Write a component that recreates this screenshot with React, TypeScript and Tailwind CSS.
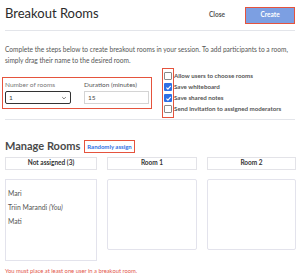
import { useState } from 'react';

// Opciones de la sala de grupos
const options = [
  { id: 'choose', label: 'Allow users to choose rooms', checked: false },
  { id: 'whiteboard', label: 'Save whiteboard', checked: true },
  { id: 'notes', label: 'Save shared notes', checked: true },
  { id: 'invite', label: 'Send invitation to assigned moderators', checked: false },
];

function CheckBox({ checked }: { checked: boolean }) {
  if (checked) {
    return (
      <span className="flex h-[8px] w-[8px] items-center justify-center rounded-[1px] bg-[#2f6fe4]">
        <svg viewBox="0 0 10 10" className="h-[7px] w-[7px]">
          <path d="M2 5.2 L4.2 7.4 L8.2 2.6" fill="none" stroke="white" strokeWidth="1.6" />
        </svg>
      </span>
    );
  }
  return <span className="h-[8px] w-[8px] rounded-[1px] border border-[#8a8a8a] bg-white" />;
}

export default function App() {
  const [rooms] = useState('1');
  const [duration] = useState('15');

  return (
    <div className="h-[279px] w-[300px] overflow-hidden bg-white px-[5px] font-['Lato',sans-serif] text-[#444]">
      {/* Cabecera */}
      <div className="flex h-[31px] items-center border-b border-[#e3e5ea]">
        <h1 className="flex-1 pb-[2px] text-[13px] text-[#2b2b2b]">Breakout Rooms</h1>
        <span className="mr-[20px] text-[6.5px] font-bold text-[#555]">Close</span>
        <button className="h-[17px] w-[50px] border-[1.5px] border-[#e5533d] bg-[#7c9fe2] text-[6.5px] font-bold text-white">
          Create
        </button>
      </div>

      <p className="mt-[13px] whitespace-nowrap text-[6.6px] leading-[11px] text-[#555]">
        Complete the steps below to create breakout rooms in your session. To add participants to a room,
        <br />
        simply drag their name to the desired room.
      </p>

      {/* Configuración */}
      <div className="mt-[2px] flex h-[51px] items-start">
        <div className="ml-[-3px] mt-[9px] flex h-[32px] w-[150px] gap-[13px] border-[1.5px] border-[#e5533d] px-[2px] pt-[1px]">
          <label className="flex w-[66px] flex-col">
            <span className="text-[6.5px] leading-[12px] text-[#777]">Number of rooms</span>
            <div className="flex h-[13px] items-center justify-between rounded-[2px] border border-[#333] px-[3px] text-[6.5px] text-[#444]">
              <span>{rooms}</span>
              <svg viewBox="0 0 10 10" className="h-[6px] w-[6px]">
                <path d="M2 3.5 L5 6.5 L8 3.5" fill="none" stroke="#555" strokeWidth="1.3" />
              </svg>
            </div>
          </label>
          <label className="flex w-[65px] flex-col">
            <span className="text-[6.5px] leading-[12px] text-[#555]">Duration (minutes)</span>
            <div className="flex h-[13px] items-center border border-[#d4d4d4] px-[3px] text-[6.5px] text-[#444]">
              {duration}
            </div>
          </label>
        </div>

        <div className="relative ml-[12px] flex flex-col gap-[3px] pt-[4px]">
          <div className="absolute left-[-2px] top-[0px] h-[50px] w-[12px] border-[1.5px] border-[#e5533d]" />
          {options.map(o => (
            <div key={o.id} className="flex h-[8px] items-center gap-[2px]">
              <CheckBox checked={o.checked} />
              <span className="text-[6.2px] font-bold text-[#555]">{o.label}</span>
            </div>
          ))}
        </div>
      </div>

      <div className="border-b border-[#e3e5ea]" />

      {/* Salas */}
      <div className="mt-[18px] flex items-center">
        <h2 className="text-[11px] font-bold text-[#4a4a4a]">Manage Rooms</h2>
        <span className="ml-[4px] border-[1.5px] border-[#e5533d] px-[2px] py-[1px] text-[6px] font-bold text-[#2f6fe4]">
          Randomly assign
        </span>
      </div>

      <div className="mt-[2px] grid grid-cols-[92px_90px_89px] gap-x-[10px]">
        <div className="flex h-[13px] items-center justify-center border border-[#e3e3e8] text-[6.5px] font-bold text-[#333]">
          Not assigned (3)
        </div>
        <div className="flex h-[13px] items-center justify-center border border-[#e3e3e8] text-[6.5px] font-bold text-[#333]">
          Room 1
        </div>
        <div className="flex h-[13px] items-center justify-center border border-[#e3e3e8] text-[6.5px] font-bold text-[#333]">
          Room 2
        </div>

        <div className="mt-[9px] flex h-[82px] flex-col gap-[5px] border border-[#e3e3ec] px-[2px] pt-[9px] text-[6.8px] leading-[9px] text-[#555]">
          <span>Mari</span>
          <span>Triin Marandi <i>(You)</i></span>
          <span>Mati</span>
        </div>
        <div className="mt-[9px] h-[71px] rounded-[2px] border border-[#e3e3ec]" />
        <div className="mt-[9px] h-[71px] rounded-[2px] border border-[#e3e3ec]" />
      </div>

      <p className="mt-[5px] text-[5.8px] leading-[9px] text-[#e3564a]">You must place at least one user in a breakout room.</p>
    </div>
  );
}
